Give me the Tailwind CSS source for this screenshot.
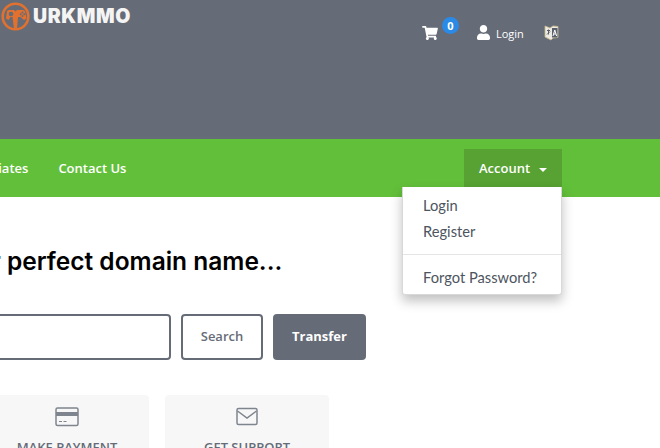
<!DOCTYPE html>
<html lang="en">
<head>
<meta charset="utf-8" />
<script src="https://cdn.jsdelivr.net/npm/@tailwindcss/browser@4"></script>
</head>
<body class="w-[660px] h-[448px] overflow-hidden bg-white font-['Open_Sans',sans-serif]">
  <!-- Header -->
  <header class="h-[139px] bg-[#666c77] flex items-start">
    <div class="flex items-center w-[422px] shrink-0">
      <svg class="shrink-0" width="33" height="33" viewBox="0 0 33 33" fill="none">
        <circle cx="15.500" cy="16.500" r="12.800" stroke="#e2702f" stroke-width="2.600"/>
        <path d="M7 11.500q0-1.500 1.500-1.500h5.500l1.500 1.500 1.500-1.500h6q1.500 0 2 1.500l1.500 7-2.500 1.500-3.500-3h-2.500L17 29h-3l-1.500-12h-2l-2 3-2.500-1.500z" fill="#e2702f"/>
        <circle cx="11" cy="14" r="2.300" fill="#666c77"/>
        <circle cx="22.500" cy="12.500" r="1" fill="#666c77"/>
        <circle cx="22.500" cy="16" r="1" fill="#666c77"/>
        <circle cx="20.700" cy="14.200" r="1" fill="#666c77"/>
        <circle cx="24.300" cy="14.200" r="1" fill="#666c77"/>
      </svg>
      <span class="text-[#f4f4f4] font-['Inter',sans-serif] font-black text-[19.500px] leading-none tracking-[0.6px]">URKMMO</span>
    </div>
    <div class="flex items-center pt-[22px] text-white">
      <svg class="mt-[1px]" width="16" height="14" viewBox="0 0 576 512" fill="#fff"><path d="M528 301.300l47.300-208C578.700 78.300 567.300 64 552 64H159.200l-9.200-44.800C147.800 8 137.900 0 126.500 0H24C10.700 0 0 10.700 0 24v16c0 13.300 10.700 24 24 24h69.900l70.200 343.400C147.300 417.100 136 435.200 136 456c0 30.900 25.100 56 56 56s56-25.100 56-56c0-15.700-6.400-29.800-16.800-40h209.600C430.400 426.200 424 440.300 424 456c0 30.900 25.100 56 56 56s56-25.100 56-56c0-22.200-12.900-41.300-31.600-50.400l5.500-24.300c3.400-15-8-29.300-23.400-29.300H218.100l-6.500-32h293c11.200 0 20.900-7.800 23.400-18.700z"/></svg>
      <span class="ml-[4px] -mt-[14px] w-[17px] h-[17px] rounded-full bg-[#2b8ae6] text-[11px] leading-[17px] font-bold text-center">0</span>
      <svg class="ml-[18px]" width="13" height="15" viewBox="0 0 448 512" fill="#fff"><path d="M224 256c70.700 0 128-57.300 128-128S294.700 0 224 0 96 57.300 96 128s57.300 128 128 128zm89.600 32h-16.700c-22.200 10.200-46.900 16-72.900 16s-50.600-5.800-72.900-16h-16.700C60.200 288 0 348.200 0 422.400V464c0 26.500 21.500 48 48 48h352c26.500 0 48-21.500 48-48v-41.600c0-74.200-60.200-134.400-134.400-134.400z"/></svg>
      <span class="ml-[6px] w-[27px] text-[11px] leading-[18px] mt-[3px] whitespace-nowrap">Login</span>
      <svg class="ml-[21px]" width="15" height="17" viewBox="0 0 15 17" fill="none">
        <path d="M1 2l5 2 3-2 5 .5v11l-5 .5-2 2-6-3z" fill="#eceae2" stroke="#c9b98d" stroke-width=".8"/>
        <path d="M8 4h5.500v9.500H8z" fill="#59606c"/>
        <path d="M3 6.500h3M4.500 5.500v5M3 10.500l3-3" stroke="#59606c" stroke-width="1"/>
        <path d="M9 12l1.800-6 1.800 6M9.800 10h2" stroke="#fff" stroke-width="1"/>
      </svg>
    </div>
  </header>

  <!-- Nav -->
  <nav class="relative h-[58px] bg-[#62bf3a] flex items-start text-white text-[13px] font-semibold">
    <div class="flex pt-[20px] leading-[18px] w-[453px] shrink-0 -ml-[27px]">
      <a class="mr-[30px]" href="#">Affiliates</a>
      <a href="#">Contact Us</a>
    </div>
    <div class="mt-[10px] ml-[38px] w-[98px] h-[38px] pt-[1px] bg-[#57a232] flex items-center justify-center">
      <span>Account</span>
      <span class="ml-[9px] mt-[2px] border-x-[4px] border-t-[4px] border-x-transparent border-t-white"></span>
    </div>
    <!-- Dropdown -->
    <div class="absolute left-[402px] top-[48px] w-[160px] h-[108px] bg-white rounded-b-[3px] shadow-[0_6px_12px_rgba(0,0,0,0.25)] border border-t-0 border-black/15 font-['Lato',sans-serif] font-normal text-[14.700px] text-[#4d5560] z-10">
      <div class="pt-[5px] pl-[20px] leading-[26px]">
        <a class="block" href="#">Login</a>
        <a class="block" href="#">Register</a>
      </div>
      <div class="mt-[10px] border-t border-[#e5e5e5]"></div>
      <a class="block pt-[9px] pl-[20px] leading-[26px]" href="#">Forgot Password?</a>
    </div>
  </nav>

  <!-- Domain search -->
  <main>
    <h2 class="mt-[48px] -ml-[9px] font-['Inter',sans-serif] font-semibold text-[24.500px] leading-[32px] text-black whitespace-nowrap">r perfect domain name...</h2>
    <form class="mt-[37px] flex items-stretch h-[46px]">
      <input class="w-[171px] border-2 border-l-0 border-[#666c77] rounded-r-[4px] bg-white" type="text" />
      <button class="ml-[10px] w-[82px] border-2 border-[#666c77] rounded-[4px] bg-white text-[#666c77] text-[13px] font-semibold" type="button">Search</button>
      <button class="ml-[10px] w-[93px] rounded-[4px] bg-[#666c77] text-white text-[13px] font-bold" type="button">Transfer</button>
    </form>
    <div class="mt-[35px] flex items-start">
      <div class="-ml-[15px] w-[164px] h-[53px] overflow-hidden bg-[#f7f7f7] rounded-t-[4px] flex flex-col items-center pt-[12px]">
        <svg class="shrink-0" width="24" height="20" viewBox="0 0 24 20" fill="none">
          <rect x="1" y="1" width="22" height="17.500" rx="1.500" stroke="#7f858e" stroke-width="1.500"/>
          <rect x="1" y="5" width="22" height="4" fill="#7f858e"/>
          <path d="M4 14.500h3M8.500 14.500h3" stroke="#7f858e" stroke-width="1"/>
        </svg>
        <span class="mt-[11px] shrink-0 text-[13px] leading-[18px] font-semibold text-[#666c77] whitespace-nowrap">MAKE PAYMENT</span>
      </div>
      <div class="ml-[16px] w-[164px] h-[53px] overflow-hidden bg-[#f7f7f7] rounded-t-[4px] flex flex-col items-center pt-[12px]">
        <svg class="shrink-0" width="22" height="19" viewBox="0 0 22 19" fill="none">
          <rect x="1" y="1.500" width="20" height="16" rx="1.500" stroke="#7f858e" stroke-width="1.500"/>
          <path d="M1.500 4l9.500 7 9.500-7" stroke="#7f858e" stroke-width="1.500"/>
        </svg>
        <span class="mt-[12px] shrink-0 text-[13px] leading-[18px] font-semibold text-[#666c77] whitespace-nowrap">GET SUPPORT</span>
      </div>
    </div>
  </main>
</body>
</html>
